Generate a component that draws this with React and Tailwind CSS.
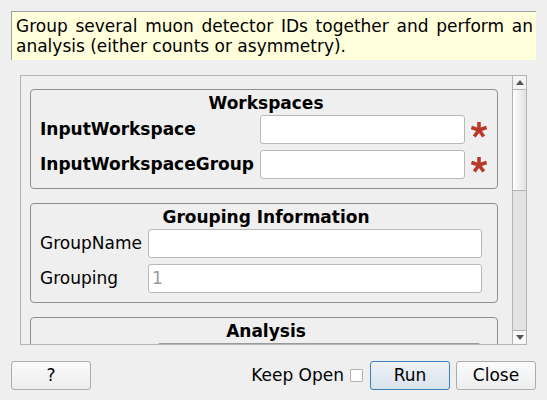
export default function App() {
  return (
    <div className="w-[547px] h-[400px] bg-[#efefef] overflow-hidden font-['DejaVu_Sans',sans-serif] text-black text-[17px]">
      <div className="pt-[11px] pl-[11px]">
        <div className="w-[525px] h-[49px] bg-[#ffffdc] border-t border-l border-[#a0a0a0] pl-[4px] pr-[3px] pt-[4px] leading-[20px] text-justify">
          Group several muon detector IDs together and perform an analysis (either counts or asymmetry).
        </div>
      </div>

      <div className="ml-[20px] mt-[15px] w-[507px] h-[270px] border border-[#b4b4b4] flex overflow-hidden">
        <div className="flex-1 pl-[9px] pt-[13px] overflow-hidden">
          {/* Workspaces */}
          <div className="w-[468px] border border-[#8e8e8e] rounded-[4px] pt-[3px] pb-[9px] px-[9px]">
            <div className="h-[19px] leading-[20px] font-bold text-center pl-[4px] mb-[3px]">Workspaces</div>
            <div className="flex flex-col gap-[6px]">
              <div className="flex items-center h-[29px]">
                <div className="w-[220px] font-bold">InputWorkspace</div>
                <div className="w-[205px] h-[29px] bg-white border border-[#b8b8b8] rounded-[3px]" />
                <Star />
              </div>
              <div className="flex items-center h-[29px]">
                <div className="w-[220px] font-bold">InputWorkspaceGroup</div>
                <div className="w-[205px] h-[29px] bg-white border border-[#b8b8b8] rounded-[3px]" />
                <Star />
              </div>
            </div>
          </div>

          {/* Grouping Information */}
          <div className="mt-[14px] w-[468px] border border-[#8e8e8e] rounded-[4px] pt-[3px] pb-[9px] px-[9px]">
            <div className="h-[19px] leading-[20px] font-bold text-center pl-[4px] mb-[3px]">Grouping Information</div>
            <div className="flex flex-col gap-[6px]">
              <div className="flex items-center h-[29px]">
                <div className="w-[108px]">GroupName</div>
                <div className="w-[334px] h-[29px] bg-white border border-[#b8b8b8] rounded-[3px]" />
              </div>
              <div className="flex items-center h-[29px]">
                <div className="w-[108px]">Grouping</div>
                <div className="w-[334px] h-[29px] bg-white border border-[#b8b8b8] rounded-[3px] flex items-center pl-[3px] text-[#9a9a9a]">
                  1
                </div>
              </div>
            </div>
          </div>

          {/* Analysis */}
          <div className="mt-[14px] w-[468px] border border-[#8e8e8e] rounded-[4px] pt-[3px] pb-[9px] px-[9px]">
            <div className="h-[19px] leading-[20px] font-bold text-center pl-[4px] mb-[3px]">Analysis</div>
            <div className="flex items-center h-[29px]">
              <div className="w-[117px]"></div>
              <div className="w-[324px] h-[29px] bg-[#f4f4f4] border border-[#9a9a9a] rounded-[3px]" />
            </div>
          </div>
        </div>

        {/* Scrollbar */}
        <div className="w-[14px] h-full border-l border-[#b4b4b4] flex flex-col">
          <div className="h-[14px] border-b border-[#b4b4b4] bg-[#f4f4f4] flex items-center justify-center">
            <svg width="8" height="5" viewBox="0 0 8 5"><path d="M0 5 L4 0 L8 5 Z" fill="#555" /></svg>
          </div>
          <div className="h-[101px] border-b border-[#b4b4b4] bg-gradient-to-r from-[#ffffff] to-[#e2e2e2]" />
          <div className="flex-1 bg-[#e2e2e2]" />
          <div className="h-[14px] border-t border-[#b4b4b4] bg-[#f8f8f8] flex items-center justify-center">
            <svg width="8" height="5" viewBox="0 0 8 5"><path d="M0 0 L8 0 L4 5 Z" fill="#555" /></svg>
          </div>
        </div>
      </div>

      {/* Bottom buttons */}
      <div className="mt-[16px] px-[11px] flex items-center h-[29px]">
        <button className="w-[80px] h-[29px] border border-[#ababab] rounded-[3px] bg-gradient-to-b from-[#fbfbfb] to-[#ededed] leading-none">?</button>
        <div className="flex-1" />
        <span>Keep Open</span>
        <div className="ml-[6px] w-[13px] h-[13px] bg-white border border-[#b0b0b0] rounded-[1px]" />
        <button className="ml-[7px] w-[80px] h-[29px] border border-[#3d7fba] rounded-[3px] bg-gradient-to-b from-[#eef2f7] to-[#d9e3ed] leading-none">Run</button>
        <button className="ml-[6px] w-[80px] h-[29px] border border-[#ababab] rounded-[3px] bg-gradient-to-b from-[#fbfbfb] to-[#ededed] leading-none">Close</button>
      </div>
    </div>
  );
}

function Star() {
  return (
    <div className="flex-1 flex items-center justify-center pl-[5px]">
      <svg width="18" height="17" viewBox="-9 -9 18 17">
        <g stroke="#b8392a" strokeWidth="3.6" strokeLinecap="butt">
          <line x1="0" y1="0" x2="0" y2="-8" />
          <line x1="0" y1="0" x2="7.6" y2="-2.5" />
          <line x1="0" y1="0" x2="-7.6" y2="-2.5" />
          <line x1="0" y1="0" x2="4.7" y2="6.5" />
          <line x1="0" y1="0" x2="-4.7" y2="6.5" />
        </g>
      </svg>
    </div>
  );
}
